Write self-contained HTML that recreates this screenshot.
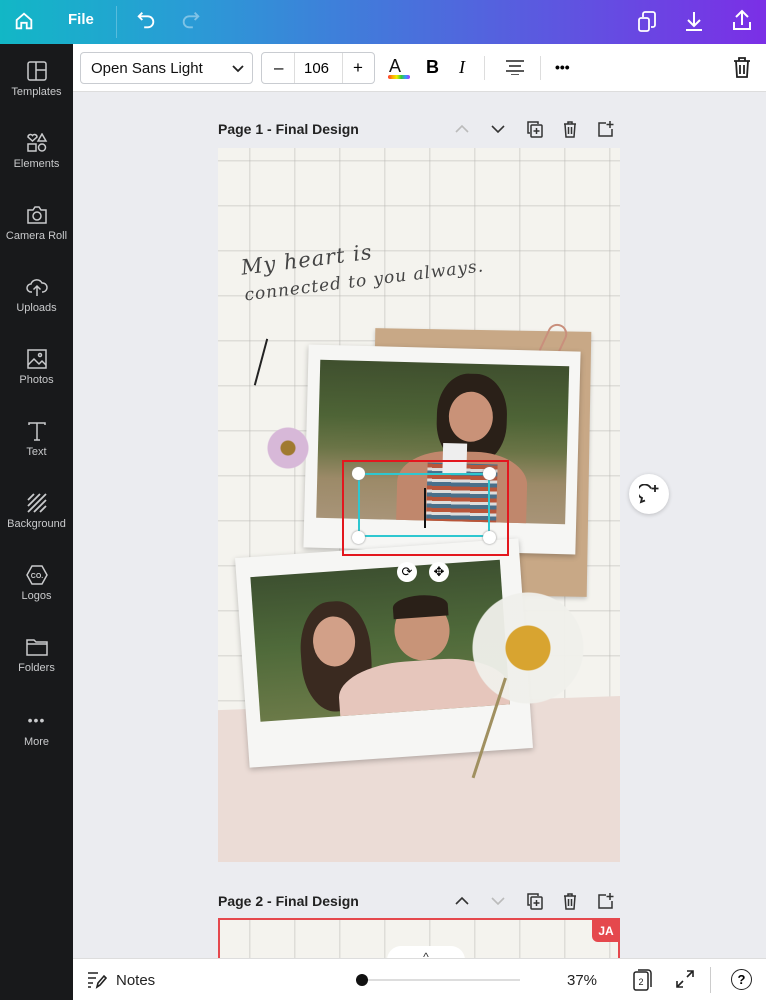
<!DOCTYPE html>
<html><head><meta charset="utf-8"><style>
*{margin:0;padding:0;box-sizing:border-box}
body{width:766px;height:1000px;overflow:hidden;background:#ebecf0;font-family:"Liberation Sans",sans-serif;position:relative}
.top{position:absolute;left:0;top:0;width:766px;height:44px;background:linear-gradient(90deg,#12b7c6 0%,#2a9bd6 25%,#4a6fdc 55%,#7b2fe6 100%)}
.side{position:absolute;left:0;top:44px;width:73px;height:956px;background:#18191b}
.si{position:absolute;left:0;width:73px;text-align:center;color:#c9cacc;font-size:11px}
.si svg{display:block;margin:0 auto 5px}
.tb{position:absolute;left:73px;top:44px;width:693px;height:48px;background:#fff;border-bottom:1px solid #ddd}
.box{position:absolute;border:1px solid #c9ccd1;border-radius:4px;background:#fff}
.bot{position:absolute;left:73px;top:958px;width:693px;height:42px;background:#fff;border-top:1px solid #ddd}
.pg{position:absolute;left:218px;top:148px;width:402px;height:714px;overflow:hidden;
background-color:#f4f3ee;background-image:linear-gradient(90deg,rgba(180,180,175,.35) 1.5px,transparent 1.5px),linear-gradient(rgba(180,180,175,.35) 1.5px,transparent 1.5px);background-size:45px 45px;background-position:31px 12px}
.lbl{position:absolute;font-size:14px;color:#222;font-weight:bold}
</style></head><body>
<div class="top">
<svg style="position:absolute;left:13px;top:10px" width="22" height="22" viewBox="0 0 24 24" fill="none" stroke="#fff" stroke-width="2"><path d="M4 11L12 4l8 7v9h-5v-6H9v6H4z"/></svg>
<div style="position:absolute;left:68px;top:11px;color:#fff;font-weight:bold;font-size:15px">File</div>
<div style="position:absolute;left:116px;top:6px;width:1px;height:32px;background:rgba(255,255,255,.25)"></div>
<svg style="position:absolute;left:135px;top:9px" width="22" height="22" viewBox="0 0 24 24" fill="none" stroke="#fff" stroke-width="2"><path d="M8 4L4 8l4 4M4 8h10a6 6 0 010 12h-4"/></svg>
<svg style="position:absolute;left:180px;top:9px" width="22" height="22" viewBox="0 0 24 24" fill="none" stroke="rgba(255,255,255,.4)" stroke-width="2"><path d="M16 4l4 4-4 4M20 8H10a6 6 0 000 12h4"/></svg>
<svg style="position:absolute;left:636px;top:9px" width="22" height="24" viewBox="0 0 22 24" fill="none" stroke="#fff" stroke-width="1.8"><rect x="3" y="9" width="10" height="13" rx="2"/><path d="M7 8V5a2 2 0 012-2h8a2 2 0 012 2v11a2 2 0 01-2 2h-2"/></svg>
<svg style="position:absolute;left:683px;top:9px" width="22" height="24" viewBox="0 0 22 24" fill="none" stroke="#fff" stroke-width="2"><path d="M11 3v13M5 11l6 6 6-6M3 21h16"/></svg>
<svg style="position:absolute;left:731px;top:8px" width="22" height="24" viewBox="0 0 22 24" fill="none" stroke="#fff" stroke-width="2"><path d="M11 17V3M5 9l6-6 6 6M3 14v7h16v-7"/></svg>
</div>
<div class="side">
<div class="si" style="top:17px"><svg width="20" height="20" viewBox="0 0 20 20" fill="none" stroke="#c9cacc" stroke-width="1.5"><rect x="1" y="1" width="18" height="18" rx="2"/><path d="M9 1v18M9 9h10"/></svg>Templates</div>
<div class="si" style="top:89px"><svg width="22" height="20" viewBox="0 0 22 20" fill="none" stroke="#c9cacc" stroke-width="1.5"><path d="M2 4a2.5 2.5 0 014.5-1.5A2.5 2.5 0 0111 4L6.5 8z"/><path d="M16 1l4 7h-8z"/><rect x="2" y="11" width="8" height="7"/><circle cx="16" cy="14.5" r="3.5"/></svg>Elements</div>
<div class="si" style="top:161px"><svg width="22" height="20" viewBox="0 0 22 20" fill="none" stroke="#c9cacc" stroke-width="1.5"><path d="M2 5h5l2-3h4l2 3h5v13H2z"/><circle cx="11" cy="11" r="4"/></svg>Camera Roll</div>
<div class="si" style="top:233px"><svg width="22" height="20" viewBox="0 0 22 20" fill="none" stroke="#c9cacc" stroke-width="1.5"><path d="M6 15H5a4 4 0 010-8 6 6 0 0111-1 4.5 4.5 0 011 9h-1"/><path d="M11 19V9M7.5 12.5L11 9l3.5 3.5"/></svg>Uploads</div>
<div class="si" style="top:305px"><svg width="20" height="20" viewBox="0 0 20 20" fill="none" stroke="#c9cacc" stroke-width="1.5"><rect x="1" y="1" width="18" height="18"/><path d="M1 16l6-6 5 5 3-3 4 4"/><circle cx="13" cy="6" r="1.5"/></svg>Photos</div>
<div class="si" style="top:377px"><svg width="20" height="20" viewBox="0 0 20 20" fill="none" stroke="#c9cacc" stroke-width="1.5"><path d="M2 4V2h16v2M10 2v17M7 19h6"/></svg>Text</div>
<div class="si" style="top:449px"><svg width="20" height="20" viewBox="0 0 20 20" fill="none" stroke="#c9cacc" stroke-width="1.8"><path d="M1 7l6-6M1 13L13 1M1 19L19 1M7 19L19 7M13 19l6-6"/></svg>Background</div>
<div class="si" style="top:521px"><svg width="22" height="20" viewBox="0 0 22 20" fill="none" stroke="#c9cacc" stroke-width="1.5"><path d="M6 1h10l5 9-5 9H6l-5-9z"/><text x="11" y="13" font-size="7" fill="#c9cacc" stroke="none" text-anchor="middle" font-family="Liberation Sans" font-weight="bold">CO.</text></svg>Logos</div>
<div class="si" style="top:593px"><svg width="22" height="20" viewBox="0 0 22 20" fill="none" stroke="#c9cacc" stroke-width="1.5"><path d="M1 3h7l2 2h11v13H1z"/><path d="M1 7h20"/></svg>Folders</div>
<div class="si" style="top:668px"><div style="font-size:14px;letter-spacing:1px;margin-bottom:8px">•••</div>More</div>
</div>
<div class="tb">
<div class="box" style="left:7px;top:8px;width:173px;height:32px"><span style="position:absolute;left:10px;top:7px;font-size:15px;color:#111">Open Sans Light</span><svg style="position:absolute;left:151px;top:12px" width="12" height="8" viewBox="0 0 12 8" fill="none" stroke="#222" stroke-width="1.8"><path d="M1 1l5 5 5-5"/></svg></div>
<div class="box" style="left:188px;top:8px;width:114px;height:32px"><span style="position:absolute;left:12px;top:5px;font-size:17px">–</span><div style="position:absolute;left:32px;top:0;width:1px;height:30px;background:#ddd"></div><span style="position:absolute;left:42px;top:7px;font-size:15px">106</span><div style="position:absolute;left:80px;top:0;width:1px;height:30px;background:#ddd"></div><span style="position:absolute;left:91px;top:5px;font-size:17px">+</span></div>
<div style="position:absolute;left:316px;top:12px;font-size:18px;color:#111">A</div>
<div style="position:absolute;left:315px;top:31px;width:22px;height:4px;border-radius:2px;background:linear-gradient(90deg,#f33,#fa0,#ee0,#3c3,#39f,#a3f)"></div>
<div style="position:absolute;left:353px;top:13px;font-size:18px;font-weight:bold">B</div>
<div style="position:absolute;left:386px;top:13px;font-size:18px;font-style:italic;font-family:'Liberation Serif',serif">I</div>
<div style="position:absolute;left:411px;top:12px;width:1px;height:24px;background:#ddd"></div>
<svg style="position:absolute;left:432px;top:15px" width="20" height="16" viewBox="0 0 20 16" stroke="#222" stroke-width="1.6"><path d="M1 2h18M4 7h12M1 12h18M6 16h8"/></svg>
<div style="position:absolute;left:467px;top:12px;width:1px;height:24px;background:#ddd"></div>
<div style="position:absolute;left:482px;top:15px;font-size:14px;font-weight:bold">•••</div>
<svg style="position:absolute;left:660px;top:13px" width="18" height="22" viewBox="0 0 18 22" fill="none" stroke="#222" stroke-width="1.8"><path d="M1 4h16M6 4V1h6v3M3 4l1 16h10l1-16M7 8v9M11 8v9"/></svg>
</div>

<div class="lbl" style="left:218px;top:121px">Page 1 - Final Design</div>
<svg style="position:absolute;left:455px;top:124px" width="14" height="10" fill="none" stroke="#bbb" stroke-width="1.6"><path d="M1 8l6-6 6 6"/></svg>
<svg style="position:absolute;left:491px;top:124px" width="14" height="10" fill="none" stroke="#333" stroke-width="1.6"><path d="M1 2l6 6 6-6"/></svg>
<svg style="position:absolute;left:527px;top:121px" width="16" height="17" fill="none" stroke="#333" stroke-width="1.5"><path d="M3 12H1V1h10v2"/><rect x="4" y="4" width="11" height="12" rx="1"/><path d="M9.5 7v6M6.5 10h6"/></svg>
<svg style="position:absolute;left:563px;top:121px" width="14" height="17" fill="none" stroke="#333" stroke-width="1.5"><path d="M1 3h12M5 3V1h4v2M2 3l1 13h8l1-13M5.5 6v7M8.5 6v7"/></svg>
<svg style="position:absolute;left:598px;top:120px" width="16" height="17" fill="none" stroke="#333" stroke-width="1.5"><path d="M8 3H1v13h13V9M12 1v7M8.5 4.5h7"/></svg>

<div class="pg">
<div style="position:absolute;left:-20px;top:555px;width:450px;height:200px;background:#ebdcd6;transform:rotate(-2deg)"></div>
<div style="position:absolute;left:24px;top:92px;font-family:'DejaVu Serif',serif;font-style:italic;font-size:21px;color:#444;transform:rotate(-7deg);letter-spacing:1px;line-height:26px">My heart is<br><span style="font-size:17px">connected to you always.</span></div>
<div style="position:absolute;left:42px;top:190px;width:1.5px;height:48px;background:#222;transform:rotate(15deg)"></div>
<div style="position:absolute;left:155px;top:182px;width:216px;height:265px;background:#c8a886;transform:rotate(1deg);box-shadow:0 2px 4px rgba(0,0,0,.2)"></div>
<div style="position:absolute;left:325px;top:175px;width:20px;height:40px;border:2px solid #c98f7c;border-radius:10px;transform:rotate(25deg)"></div>
<div style="position:absolute;left:88px;top:200px;width:272px;height:203px;background:#f6f6f4;transform:rotate(1.5deg);box-shadow:0 2px 6px rgba(0,0,0,.25)">
 <div style="position:absolute;left:12px;top:15px;width:249px;height:158px;overflow:hidden;background:linear-gradient(180deg,#3f4f2e 0%,#4e6436 35%,#6a7446 55%,#9c8a68 75%,#a89478 100%)">
  <div style="position:absolute;left:118px;top:10px;width:70px;height:90px;border-radius:45%;background:#2a2018"></div>
  <div style="position:absolute;left:130px;top:28px;width:44px;height:50px;border-radius:50%;background:#c99278"></div>
  <div style="position:absolute;left:80px;top:88px;width:130px;height:80px;border-radius:40% 40% 0 0;background:#c0876c"></div>
  <div style="position:absolute;left:110px;top:100px;width:70px;height:60px;background:repeating-linear-gradient(0deg,#b8553a 0 4px,#4a6f8a 4px 8px,#ddd 8px 11px)"></div>
  <div style="position:absolute;left:125px;top:80px;width:24px;height:30px;background:#eee"></div>
 </div>
</div>
<div style="position:absolute;left:40px;top:270px;width:60px;height:60px;border-radius:50%;background:radial-gradient(circle,#a07a30 0 7px,#d7b8d8 8px 20px,transparent 21px)"></div>
<div style="position:absolute;left:24px;top:400px;width:284px;height:210px;background:#f6f6f4;transform:rotate(-4deg);box-shadow:0 2px 6px rgba(0,0,0,.25)">
 <div style="position:absolute;left:14px;top:20px;width:250px;height:145px;overflow:hidden;background:linear-gradient(180deg,#3d5030 0%,#4f6a3a 50%,#6b7a48 100%)">
  <div style="position:absolute;left:45px;top:30px;width:70px;height:110px;border-radius:45%;background:#3a2a20"></div>
  <div style="position:absolute;left:58px;top:45px;width:42px;height:50px;border-radius:50%;background:#d2a088"></div>
  <div style="position:absolute;left:140px;top:35px;width:55px;height:60px;border-radius:50%;background:#c89478"></div>
  <div style="position:absolute;left:140px;top:30px;width:55px;height:22px;border-radius:50% 50% 0 0;background:#2a2018"></div>
  <div style="position:absolute;left:80px;top:95px;width:170px;height:80px;border-radius:40% 40% 0 0;background:#e6c6bc"></div>
 </div>
</div>
<div style="position:absolute;left:250px;top:440px;width:120px;height:120px;border-radius:50%;background:radial-gradient(circle,#d8a430 0 22px,rgba(240,240,235,.95) 23px 55px,transparent 56px)"></div>
<div style="position:absolute;left:286px;top:530px;width:3px;height:105px;background:#a09060;transform:rotate(18deg);transform-origin:top"></div>
<div style="position:absolute;left:124px;top:312px;width:167px;height:96px;border:2px solid #e3171e"></div>
<div style="position:absolute;left:140px;top:325px;width:132px;height:64px;border:2px solid #2ec7d0"></div>
<div style="position:absolute;left:206px;top:340px;width:2px;height:40px;background:#111"></div>
<div style="position:absolute;left:134px;top:319px;width:13px;height:13px;border-radius:50%;background:#fff;box-shadow:0 0 2px #888"></div>
<div style="position:absolute;left:265px;top:319px;width:13px;height:13px;border-radius:50%;background:#fff;box-shadow:0 0 2px #888"></div>
<div style="position:absolute;left:134px;top:383px;width:13px;height:13px;border-radius:50%;background:#fff;box-shadow:0 0 2px #888"></div>
<div style="position:absolute;left:265px;top:383px;width:13px;height:13px;border-radius:50%;background:#fff;box-shadow:0 0 2px #888"></div>
<div style="position:absolute;left:179px;top:414px;width:20px;height:20px;border-radius:50%;background:#fff;text-align:center;font-size:13px;line-height:20px">⟳</div>
<div style="position:absolute;left:211px;top:414px;width:20px;height:20px;border-radius:50%;background:#fff;text-align:center;font-size:13px;line-height:20px">✥</div>
</div>

<div style="position:absolute;left:629px;top:474px;width:40px;height:40px;border-radius:50%;background:#fff;box-shadow:0 1px 4px rgba(0,0,0,.2)"><svg style="position:absolute;left:10px;top:10px" width="21" height="20" fill="none" stroke="#222" stroke-width="1.8"><path d="M12 4.5A7 7 0 103 14l-1 4 4-1.5"/><path d="M16 1v7M12.5 4.5h7"/></svg></div>

<div class="lbl" style="left:218px;top:893px">Page 2 - Final Design</div>
<svg style="position:absolute;left:455px;top:896px" width="14" height="10" fill="none" stroke="#333" stroke-width="1.6"><path d="M1 8l6-6 6 6"/></svg>
<svg style="position:absolute;left:491px;top:896px" width="14" height="10" fill="none" stroke="#bbb" stroke-width="1.6"><path d="M1 2l6 6 6-6"/></svg>
<svg style="position:absolute;left:527px;top:893px" width="16" height="17" fill="none" stroke="#333" stroke-width="1.5"><path d="M3 12H1V1h10v2"/><rect x="4" y="4" width="11" height="12" rx="1"/><path d="M9.5 7v6M6.5 10h6"/></svg>
<svg style="position:absolute;left:563px;top:893px" width="14" height="17" fill="none" stroke="#333" stroke-width="1.5"><path d="M1 3h12M5 3V1h4v2M2 3l1 13h8l1-13M5.5 6v7M8.5 6v7"/></svg>
<svg style="position:absolute;left:598px;top:892px" width="16" height="17" fill="none" stroke="#333" stroke-width="1.5"><path d="M8 3H1v13h13V9M12 1v7M8.5 4.5h7"/></svg>
<div style="position:absolute;left:218px;top:918px;width:402px;height:50px;border:2px solid #e5484d;border-bottom:none;background-color:#f4f3ee;background-image:linear-gradient(90deg,rgba(180,180,175,.35) 1.5px,transparent 1.5px);background-size:45px 45px;background-position:29px 0"></div>
<div style="position:absolute;left:592px;top:920px;width:28px;height:22px;background:#e5484d;border-radius:0 0 0 6px;color:#fff;font-size:12px;font-weight:bold;text-align:center;line-height:22px">JA</div>
<div style="position:absolute;left:387px;top:946px;width:78px;height:20px;background:#fff;border-radius:14px 14px 0 0;text-align:center;font-size:12px;color:#333;line-height:22px">^</div>

<div class="bot">
<svg style="position:absolute;left:14px;top:12px" width="20" height="18" fill="none" stroke="#222" stroke-width="1.6"><path d="M1 2h10M1 7h8M1 12h5M1 16h3M10 16l1-4 6-7 2 2-6 7z"/></svg>
<div style="position:absolute;left:43px;top:13px;font-size:15px;color:#222">Notes</div>
<div style="position:absolute;left:290px;top:20px;width:157px;height:2px;background:#ddd"></div>
<div style="position:absolute;left:283px;top:15px;width:12px;height:12px;border-radius:50%;background:#111"></div>
<div style="position:absolute;left:494px;top:13px;font-size:15px;color:#222">37%</div>
<svg style="position:absolute;left:560px;top:9px" width="20" height="24" fill="none" stroke="#222" stroke-width="1.5"><rect x="1" y="4" width="14" height="18" rx="2"/><path d="M5 2h10a3 3 0 013 3v14"/><text x="8" y="17" font-size="9" fill="#222" stroke="none" text-anchor="middle" font-family="Liberation Sans">2</text></svg>
<svg style="position:absolute;left:603px;top:11px" width="18" height="18" fill="none" stroke="#222" stroke-width="1.6"><path d="M11 1h6v6M17 1l-6 6M7 17H1v-6M1 17l6-6"/></svg>
<div style="position:absolute;left:637px;top:8px;width:1px;height:26px;background:#ccc"></div>
<div style="position:absolute;left:658px;top:10px;width:21px;height:21px;border:1.6px solid #222;border-radius:50%;text-align:center;font-size:13px;line-height:19px;font-weight:bold">?</div>
</div>
</body></html>
